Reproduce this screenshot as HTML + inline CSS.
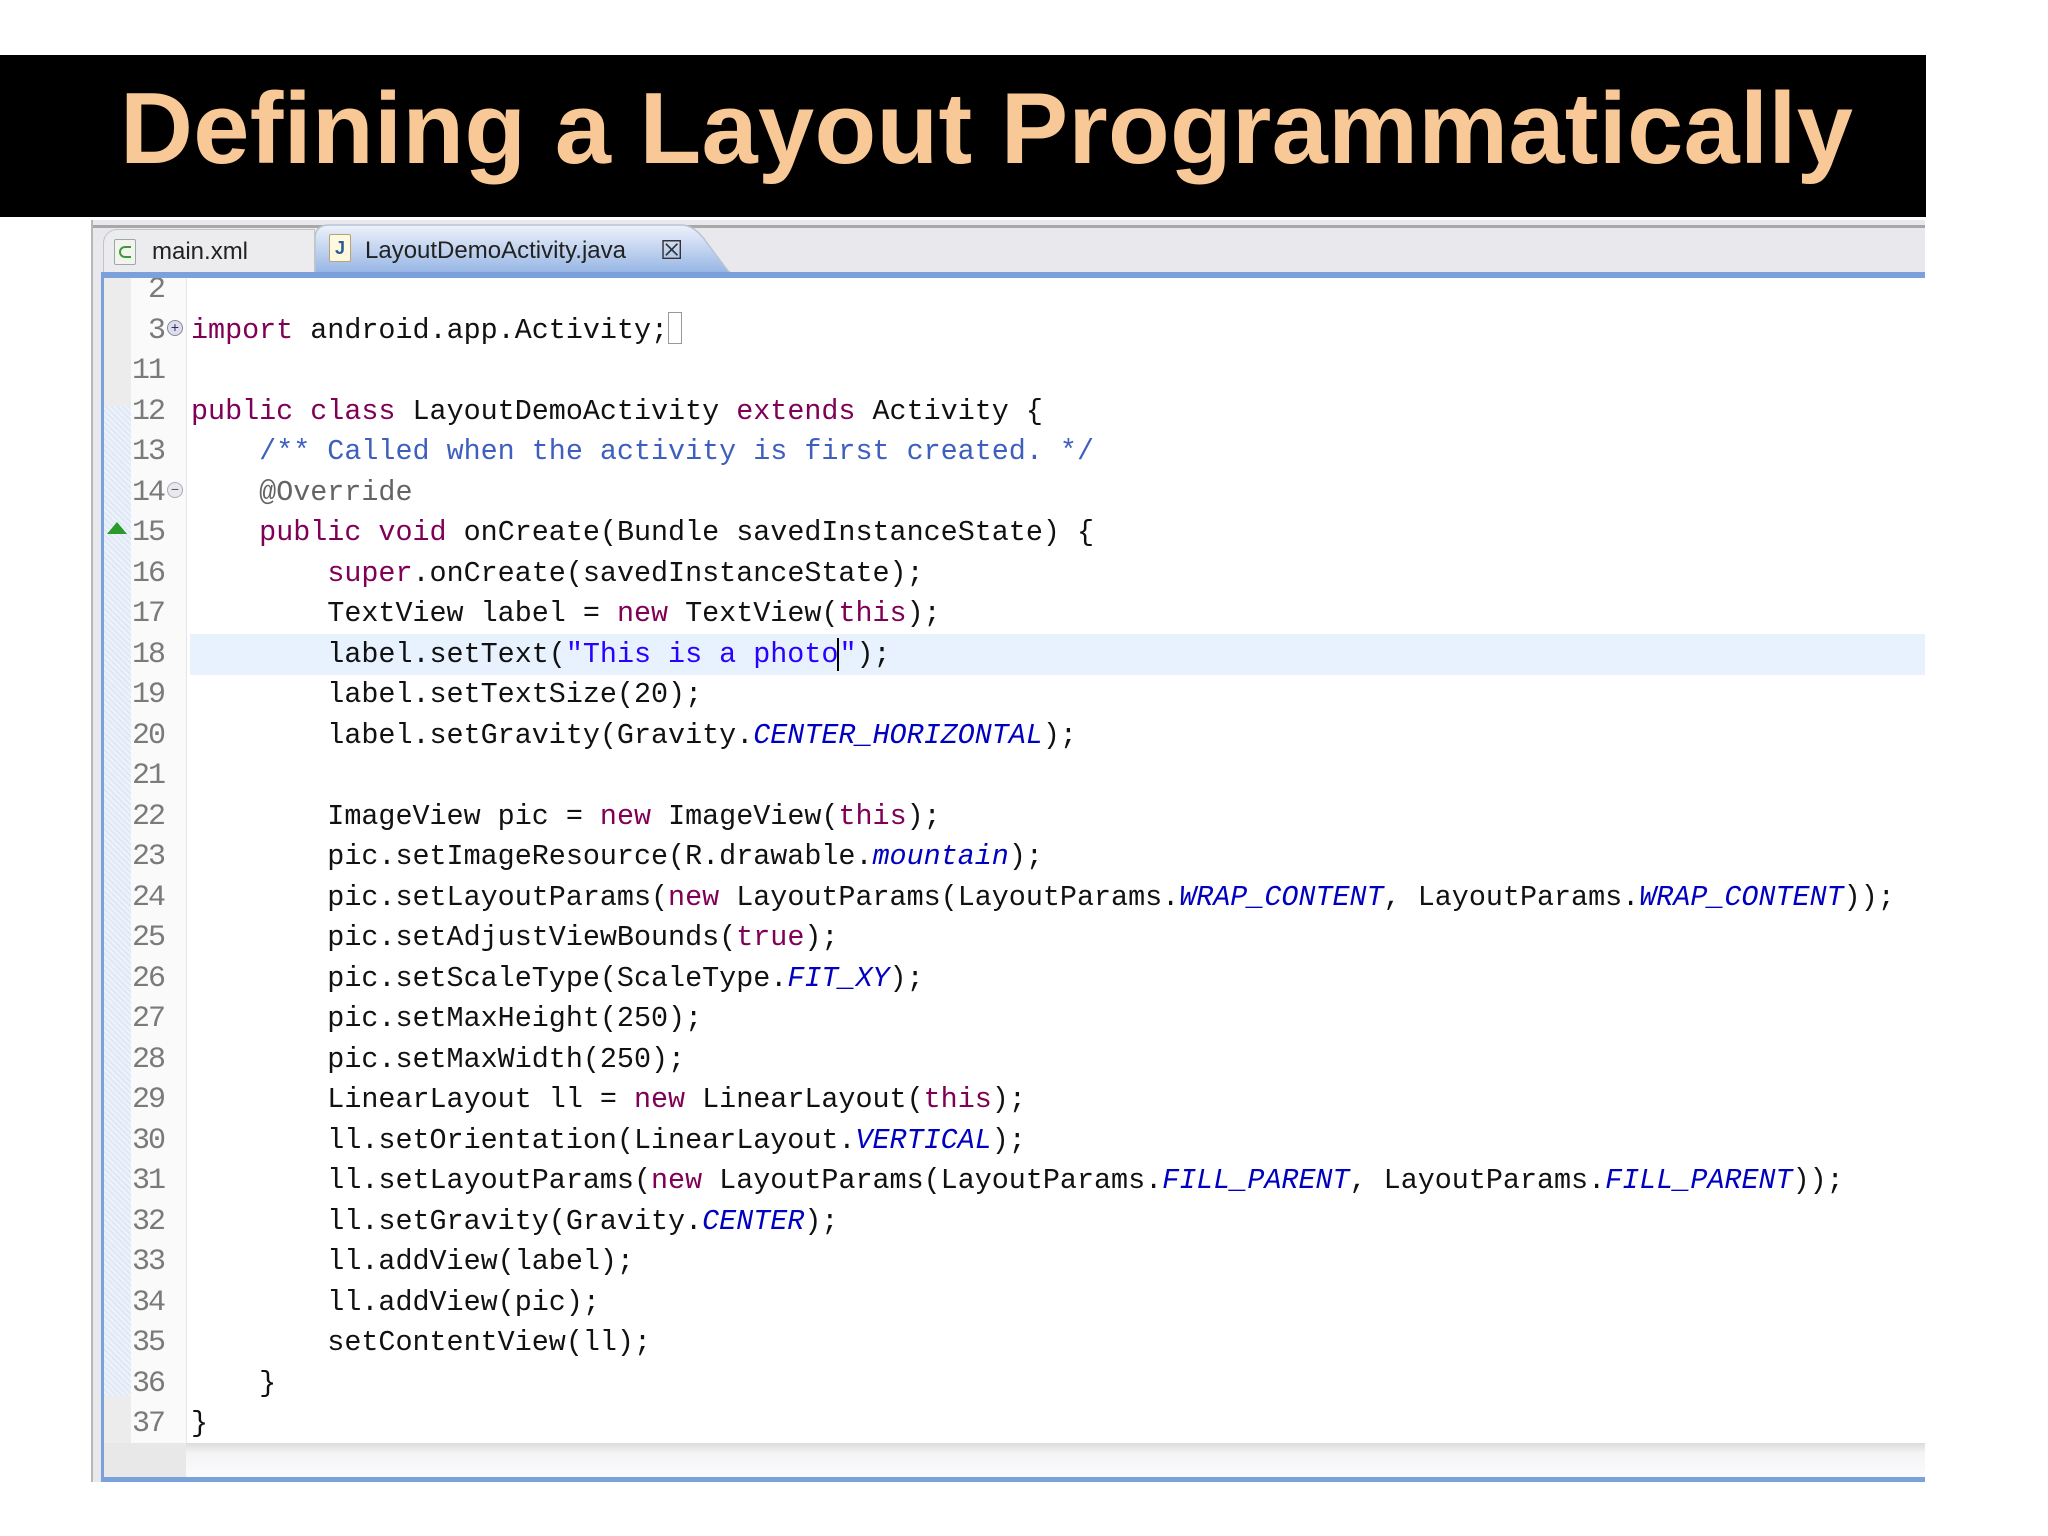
<!DOCTYPE html>
<html><head><meta charset="utf-8"><style>
*{margin:0;padding:0;box-sizing:border-box}
body{width:2048px;height:1536px;background:#fff;position:relative;overflow:hidden;font-family:"Liberation Sans",sans-serif}
#bar{position:absolute;left:0;top:55px;width:1926px;height:162px;background:#000}
#title{position:absolute;left:120px;top:64px;font-size:101px;font-weight:bold;color:#f8c997;white-space:nowrap;letter-spacing:0.3px;line-height:130px}
#panel{position:absolute;left:91px;top:220px;width:1834px;height:1262px;background:#e9e8ec;border-left:2px solid #b8b8b8}
#tabbar{position:absolute;left:93px;top:225px;width:1832px;height:49px;background:#e9e8ec;border-top:3px solid #a8a8a8}
.tab{position:absolute;top:229px;height:45px;font-size:24px;color:#222;line-height:44px}
#t1{left:103px;width:212px;border:1px solid #c4c4c4;border-bottom:none;border-radius:14px 0 0 0;background:#ecebee}
#t2{left:315px;width:420px}
#t2 svg{position:absolute;left:0;top:-6px}
#blue{position:absolute;left:101px;top:272px;width:1824px;height:6px;background:#7ba1dd}
#editor{position:absolute;left:104px;top:278px;width:1821px;height:1165px;background:#fff;overflow:hidden}
#gut{position:absolute;left:0;top:0;width:27px;height:1165px;background:#ececec}
#gutb{position:absolute;left:0;top:128px;width:27px;height:990px;background:repeating-linear-gradient(45deg,#dfe8f6 0 2px,#eef3fb 2px 4px)}
#lnbg{position:absolute;left:27px;top:0;width:55px;height:1165px;background:#fafafa}
#div{position:absolute;left:82px;top:0;width:1px;height:1165px;background:#e6e6e6}
#hl{position:absolute;left:86px;top:356px;width:1735px;height:41px;background:#e8f2fe}
.ln{position:absolute;left:10px;width:50px;text-align:right;font-family:"Liberation Mono",monospace;font-size:30px;color:#7a7a7a;line-height:40.5px;letter-spacing:-2px}
.cd{position:absolute;left:87px;font-family:"Liberation Mono",monospace;font-size:28.4px;color:#111;line-height:40.5px;white-space:pre}
.k{color:#7f0055}.s{color:#2a00ff}.c{color:#3f5fbf}.i{color:#0000c0;font-style:italic}.a{color:#646464}
#bot{position:absolute;left:104px;top:1443px;width:1821px;height:34px;background:linear-gradient(#dcdcdc,#f4f4f6 30%,#fbfbfc)}
#blueb{position:absolute;left:101px;top:1477px;width:1824px;height:5px;background:#7ba1dd}
#bluel{position:absolute;left:101px;top:272px;width:3px;height:1210px;background:#7ba1dd}
</style></head><body>
<div id="bar"></div>
<div id="title">Defining a Layout Programmatically</div>
<div id="panel"></div>
<div id="tabbar"></div>
<div class="tab" id="t1"><span style="position:absolute;left:10px;top:9px;width:22px;height:26px;border:1px solid #9aa;background:#f4f4ee;border-radius:2px"><span style="position:absolute;left:4px;top:6px;width:12px;height:12px;border:2px solid #3a9a3a;border-right:none;border-radius:6px 0 0 6px"></span></span><span style="position:absolute;left:48px;top:0">main.xml</span></div>
<div class="tab" id="t2"><svg width="420" height="52"><defs><linearGradient id="g" x1="0" y1="0" x2="0" y2="1"><stop offset="0" stop-color="#eef2fa"/><stop offset="1" stop-color="#93b3e4"/></linearGradient></defs><path d="M0 52 L0 16 Q0 2 14 2 L366 2 Q380 2 392 20 L410 44 Q416 52 420 52 Z" fill="url(#g)" stroke="#b8c4d6" stroke-width="1.5"/></svg>
<span style="position:absolute;left:14px;top:5px;width:22px;height:28px;border:1px solid #b9a36a;background:#fff8e0;border-radius:2px;font-size:18px;line-height:26px;text-align:center;color:#2a5e8e;font-weight:bold">J</span>
<span style="position:absolute;left:50px;top:0">LayoutDemoActivity.java</span>
<span style="position:absolute;left:345px;top:-1px;font-size:26px;color:#333">&#x2612;</span></div>
<div id="bluel"></div>
<div id="blue"></div>
<div id="editor">
<div id="gut"></div><div id="gutb"></div><div id="lnbg"></div><div id="div"></div>
<div id="hl"></div>
<div style="position:absolute;left:3px;top:244px;width:0;height:0;border-left:10px solid transparent;border-right:10px solid transparent;border-bottom:12px solid #2a9a2a"></div>
<div style="position:absolute;left:63px;top:42px;width:16px;height:16px;border-radius:50%;border:1px solid #889;background:#dde;font-size:14px;line-height:13px;text-align:center;color:#235">+</div>
<div style="position:absolute;left:63px;top:204px;width:16px;height:16px;border-radius:50%;border:1px solid #aab;background:#e8e8ee;font-size:14px;line-height:13px;text-align:center;color:#556">&minus;</div>
<div id="lines"></div>
</div>
<div id="bot"></div><div style="position:absolute;left:104px;top:1443px;width:82px;height:34px;background:#e8e8e8"></div>
<div id="blueb"></div>
<script>
var rows=[
["2",""],
["3",'<span class="k">import</span> android.app.Activity;<span style="display:inline-block;width:14px;height:32px;border:1px solid #999;vertical-align:-6px"></span>'],
["11",""],
["12",'<span class="k">public class</span> LayoutDemoActivity <span class="k">extends</span> Activity {'],
["13",'    <span class="c">/** Called when the activity is first created. */</span>'],
["14",'    <span class="a">@Override</span>'],
["15",'    <span class="k">public void</span> onCreate(Bundle savedInstanceState) {'],
["16",'        <span class="k">super</span>.onCreate(savedInstanceState);'],
["17",'        TextView label = <span class="k">new</span> TextView(<span class="k">this</span>);'],
["18",'        label.setText(<span class="s">"This is a photo</span><span style="border-left:2px solid #000;margin-left:-1px"></span><span class="s">"</span>);'],
["19",'        label.setTextSize(20);'],
["20",'        label.setGravity(Gravity.<span class="i">CENTER_HORIZONTAL</span>);'],
["21",''],
["22",'        ImageView pic = <span class="k">new</span> ImageView(<span class="k">this</span>);'],
["23",'        pic.setImageResource(R.drawable.<span class="i">mountain</span>);'],
["24",'        pic.setLayoutParams(<span class="k">new</span> LayoutParams(LayoutParams.<span class="i">WRAP_CONTENT</span>, LayoutParams.<span class="i">WRAP_CONTENT</span>));'],
["25",'        pic.setAdjustViewBounds(<span class="k">true</span>);'],
["26",'        pic.setScaleType(ScaleType.<span class="i">FIT_XY</span>);'],
["27",'        pic.setMaxHeight(250);'],
["28",'        pic.setMaxWidth(250);'],
["29",'        LinearLayout ll = <span class="k">new</span> LinearLayout(<span class="k">this</span>);'],
["30",'        ll.setOrientation(LinearLayout.<span class="i">VERTICAL</span>);'],
["31",'        ll.setLayoutParams(<span class="k">new</span> LayoutParams(LayoutParams.<span class="i">FILL_PARENT</span>, LayoutParams.<span class="i">FILL_PARENT</span>));'],
["32",'        ll.setGravity(Gravity.<span class="i">CENTER</span>);'],
["33",'        ll.addView(label);'],
["34",'        ll.addView(pic);'],
["35",'        setContentView(ll);'],
["36",'    }'],
["37",'}']];
var h='';
for(var r=0;r<rows.length;r++){var t=-8+r*40.5;
h+='<div class="ln" style="top:'+t+'px">'+rows[r][0]+'</div><div class="cd" style="top:'+t+'px">'+rows[r][1]+'</div>';}
document.getElementById('lines').innerHTML=h;
</script>
</body></html>
